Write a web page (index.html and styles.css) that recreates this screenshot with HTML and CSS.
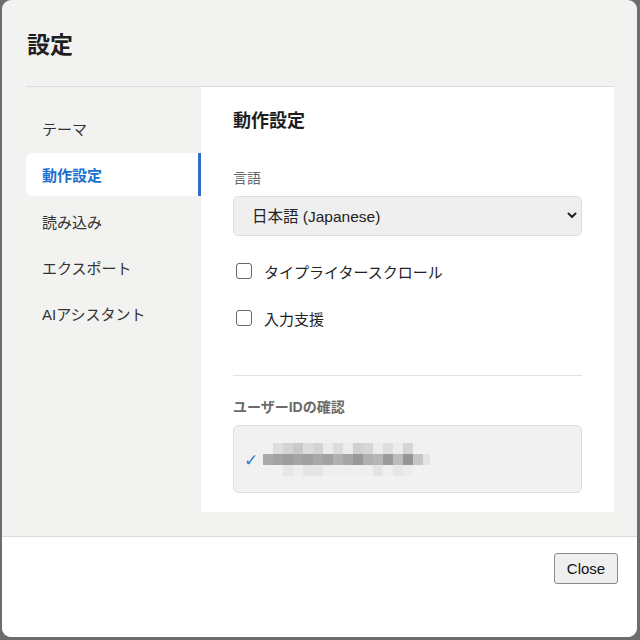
FILE: index.html
```html
<!DOCTYPE html>
<html lang="ja">
<head>
<meta charset="utf-8">
<title>設定</title>
<link rel="stylesheet" href="styles.css">
</head>
<body>
<div class="dialog">
  <header class="header"><h1 class="title">設定</h1></header>
  <div class="main">
    <nav class="sidebar">
      <div class="nav-item">テーマ</div>
      <div class="nav-item active">動作設定</div>
      <div class="nav-item">読み込み</div>
      <div class="nav-item">エクスポート</div>
      <div class="nav-item">AIアシスタント</div>
    </nav>
    <section class="panel">
      <h2 class="heading">動作設定</h2>
      <label class="label">言語</label>
      <div class="select-wrap">
        <select class="select"><option>日本語 (Japanese)</option></select>
        <svg class="chevron" width="10" height="7" viewBox="0 0 10 7"><path d="M1.5 1.5 L5 5 L8.5 1.5" fill="none" stroke="#222" stroke-width="2" stroke-linecap="round" stroke-linejoin="round"/></svg>
      </div>
      <div class="check-row"><span class="box"></span><span>タイプライタースクロール</span></div>
      <div class="check-row second"><span class="box"></span><span>入力支援</span></div>
      <hr class="divider">
      <div class="sub-label">ユーザーIDの確認</div>
      <div class="id-box">
        <span class="tick">✓</span>
        <div class="pix">
          <div class="pix-row r1"></div>
          <div class="pix-row r2"></div>
          <div class="pix-row r3"></div>
        </div>
      </div>
    </section>
  </div>
  <footer class="footer"><button class="close">Close</button></footer>
</div>
</body>
</html>
```
FILE: styles.css
```css
* { box-sizing: border-box; }
html, body { margin: 0; padding: 0; }
body {
  background: #6d6d6d;
  width: 640px;
  height: 640px;
  overflow: hidden;
  font-family: "Liberation Sans", "Noto Sans CJK JP", sans-serif;
  color: #222;
}
.dialog {
  margin: 0 3px 0 2px;
  width: 635px;
  height: 637px;
  border-radius: 9px;
  background: #f2f2f1;
  overflow: hidden;
  display: flex;
  flex-direction: column;
}
.header {
  height: 86px;
  display: flex;
  align-items: center;
  padding-left: 25px;
  flex: none;
}
.title {
  margin: 0;
  font-size: 23px;
  font-weight: 700;
  color: #1e1e1e;
}
.main {
  margin: 0 23px 24px 24px;
  border-top: 1px solid #dcdcdc;
  display: flex;
  height: 426px;
  flex: none;
}
.sidebar {
  width: 175px;
  flex: none;
  padding-top: 20px;
  display: flex;
  flex-direction: column;
  gap: 3.3px;
}
.nav-item {
  height: 43px;
  flex: none;
  display: flex;
  align-items: center;
  padding-left: 16px;
  font-size: 15px;
  color: #333;
}
.nav-item.active {
  background: #fff;
  color: #1b6fd1;
  font-weight: 700;
  border-radius: 6px 0 0 6px;
  border-right: 3px solid #2f6fc4;
}
.panel {
  flex: 1;
  background: #fff;
  padding: 22px 32px 0 32px;
  display: flex;
  flex-direction: column;
}
.heading {
  margin: 0;
  font-size: 18px;
  line-height: 24px;
  font-weight: 700;
  color: #1e1e1e;
}
.label {
  margin-top: 35px;
  font-size: 14px;
  line-height: 20px;
  color: #666;
}
.select-wrap {
  position: relative;
  margin-top: 8px;
  height: 40px;
}
.select {
  appearance: none;
  -webkit-appearance: none;
  width: 100%;
  height: 40px;
  background: #efefef;
  border: 1px solid #dedede;
  border-radius: 5px;
  padding: 0 0 0 18px;
  font-family: "Liberation Sans", "Noto Sans CJK JP", sans-serif;
  font-size: 15.5px;
  color: #222;
}
.chevron {
  position: absolute;
  right: 5px;
  top: 16px;
}
.check-row {
  margin-top: 25px;
  height: 20px;
  display: flex;
  align-items: center;
  gap: 12px;
  font-size: 15px;
  color: #222;
  padding-left: 3px;
}
.check-row.second { margin-top: 27px; }
.box {
  width: 16px;
  height: 16px;
  border: 1.5px solid #666;
  border-radius: 3px;
  background: #fff;
  flex: none;
}
.divider {
  margin: 47px 0 0 0;
  border: none;
  border-top: 1px solid #e2e2e2;
  height: 0;
}
.sub-label {
  margin-top: 21px;
  font-size: 14px;
  line-height: 20px;
  font-weight: 700;
  color: #6a6a6a;
}
.id-box {
  margin-top: 8px;
  height: 68px;
  background: #f1f1f1;
  border: 1px solid #dddddd;
  border-radius: 6px;
  display: flex;
  align-items: center;
  padding-left: 10px;
}
.tick {
  color: #2f7ad6;
  font-size: 17px;
  font-family: "DejaVu Sans", sans-serif;
  width: 19px;
  margin-top: 1px;
}
.pix {
  display: flex;
  flex-direction: column;
  width: 167px;
  margin-top: 1px;
}
.pix-row { height: 11px; }
.r1 {
  background: linear-gradient(to right,
    #f1f1f1 0 10px, #dedede 10px 20px, #d3d3d3 20px 30px, #c9c9c9 30px 40px,
    #dcdcdc 40px 50px, #d4d4d4 50px 60px, #ebebeb 60px 70px, #dcdcdc 70px 80px,
    #ececec 80px 90px, #d0d0d0 90px 100px, #d6d6d6 100px 110px, #ececec 110px 120px,
    #dedede 120px 130px, #ececec 130px 140px, #d5d5d5 140px 150px, #f1f1f1 150px 167px);
}
.r2 {
  background: linear-gradient(to right,
    #a9a9a9 0 10px, #a3a3a3 10px 20px, #9e9e9e 20px 30px, #a5a5a5 30px 40px,
    #a0a0a0 40px 50px, #a8a8a8 50px 60px, #a2a2a2 60px 70px, #b1b1b1 70px 80px,
    #a6a6a6 80px 90px, #989898 90px 100px, #b0b0b0 100px 110px, #b6b6b6 110px 120px,
    #9b9b9b 120px 130px, #bcbcbc 130px 140px, #969696 140px 150px, #c6c6c6 150px 160px, #e3e3e3 160px 167px);
}
.r3 {
  background: linear-gradient(to right,
    #f1f1f1 0 20px, #e6e6e6 20px 30px, #eeeeee 30px 40px, #e5e5e5 40px 60px,
    #efefef 60px 110px, #e4e4e4 110px 120px, #efefef 120px 130px, #e6e6e6 130px 140px,
    #ededed 140px 150px, #f1f1f1 150px 167px);
}
.footer {
  flex: 1;
  background: #fff;
  border-top: 1px solid #dcdcdc;
  display: flex;
  justify-content: flex-end;
  align-items: flex-start;
  padding: 16px 19px 0 0;
}
.close {
  width: 64px;
  height: 31px;
  background: #efefef;
  border: 1px solid #8a8a8a;
  border-radius: 3px;
  font-family: "Liberation Sans", sans-serif;
  font-size: 15px;
  color: #111;
  padding: 0;
}
```
